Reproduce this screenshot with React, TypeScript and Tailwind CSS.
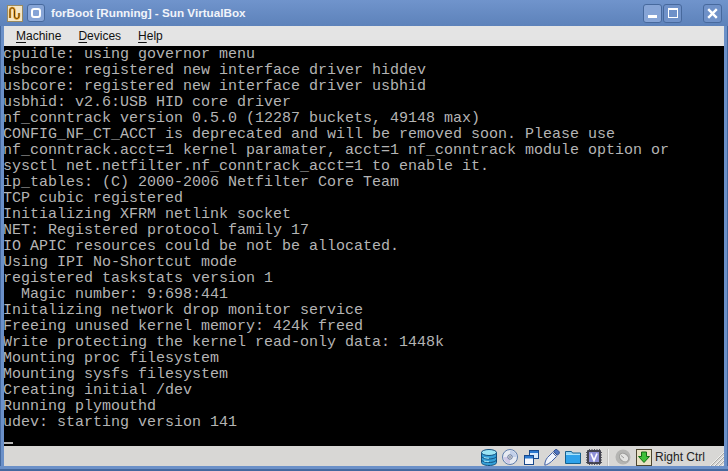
const lines = [
  "cpuidle: using governor menu",
  "usbcore: registered new interface driver hiddev",
  "usbcore: registered new interface driver usbhid",
  "usbhid: v2.6:USB HID core driver",
  "nf_conntrack version 0.5.0 (12287 buckets, 49148 max)",
  "CONFIG_NF_CT_ACCT is deprecated and will be removed soon. Please use",
  "nf_conntrack.acct=1 kernel paramater, acct=1 nf_conntrack module option or",
  "sysctl net.netfilter.nf_conntrack_acct=1 to enable it.",
  "ip_tables: (C) 2000-2006 Netfilter Core Team",
  "TCP cubic registered",
  "Initializing XFRM netlink socket",
  "NET: Registered protocol family 17",
  "IO APIC resources could be not be allocated.",
  "Using IPI No-Shortcut mode",
  "registered taskstats version 1",
  "  Magic number: 9:698:441",
  "Initalizing network drop monitor service",
  "Freeing unused kernel memory: 424k freed",
  "Write protecting the kernel read-only data: 1448k",
  "Mounting proc filesystem",
  "Mounting sysfs filesystem",
  "Creating initial /dev",
  "Running plymouthd",
  "udev: starting version 141",
];

function TitleButton({ children, active }: { children: React.ReactNode; active?: boolean }) {
  return (
    <div className={`w-[19px] h-[19px] rounded-[3px] border border-[#47699d] flex items-center justify-center ${active ? "bg-[#86a4d6]" : "bg-[#6f91c8]"}`}>
      {children}
    </div>
  );
}

function StatusIcons() {
  return (
    <div className="flex items-center h-full gap-[5px]">
      <svg width="16" height="17" viewBox="0 0 16 17">
        <path d="M0.500 3.500v10c0 1.700 3.300 3 7.500 3s7.500-1.300 7.500-3v-10z" fill="#35a0d8" stroke="#12507e" />
        <ellipse cx="8" cy="3.500" rx="7.500" ry="3" fill="#9be4f4" stroke="#12507e" />
        <path d="M0.500 7c0 1.700 3.300 3 7.500 3s7.500-1.300 7.500-3M0.500 10.500c0 1.700 3.300 3 7.500 3s7.500-1.300 7.500-3" fill="none" stroke="#12507e" />
        <path d="M3 8.500c1.500.5 3 .7 5 .7M3 12c1.500.5 3 .7 5 .7" fill="none" stroke="#a8e8f8" />
      </svg>
      <svg width="16" height="16" viewBox="0 0 16 16">
        <circle cx="8" cy="8" r="7.500" fill="#e6eaf2" stroke="#5d7cab" />
        <path d="M8 1.500a6.500 6.500 0 0 1 6.500 6.500H10a2 2 0 0 0-2-2z" fill="#c2d0ea" />
        <path d="M8 14.500A6.500 6.500 0 0 1 1.500 8H6a2 2 0 0 0 2 2z" fill="#cfc9e6" />
        <circle cx="8" cy="8" r="2.200" fill="#fff" stroke="#5a6d90" />
        <circle cx="8" cy="8" r="0.800" fill="#2e3a55" />
      </svg>
      <svg width="15" height="15" viewBox="0 0 15 15" className="ml-[1px]">
        <rect x="5.500" y="0.500" width="9" height="8" fill="#d6e8fb" stroke="#17488c" />
        <rect x="6" y="1" width="8" height="2" fill="#2a78d0" />
        <rect x="0.500" y="5.500" width="9" height="9" fill="#f4f8ff" stroke="#17488c" />
        <rect x="1" y="6" width="8" height="2.500" fill="#2a78d0" />
      </svg>
      <svg width="16" height="17" viewBox="0 0 16 17">
        <path d="M0.800 16.200c0-3 1-5.500 2.700-7.700l5-5 4 4-5 5c-2.200 1.700-4 3.200-6.700 3.700z" fill="#f0f4fb" stroke="#3f5fa5" />
        <path d="M9.500 2.500l1.800-1.800c.6-.4 1.200-.4 1.800 0l2 2c.4.600.4 1.200 0 1.800L13.300 6.300z" fill="#4f74bd" stroke="#2f4c8c" />
      </svg>
      <svg width="16" height="14" viewBox="0 0 16 14">
        <path d="M0.500 1.500h6l1 1.500h8v10.500h-15z" fill="#8fd4f6" stroke="#14608f" />
        <rect x="1" y="4.500" width="14" height="8.500" fill="#2fa2ea" />
        <path d="M1 4.500h14" stroke="#a8e2fb" />
      </svg>
      <svg width="16" height="16" viewBox="0 0 16 16">
        <rect x="1" y="1" width="14" height="14" rx="1" fill="#43434f" />
        <path d="M1 3.500H0M1 6H0M1 8.500H0M1 11H0M1 13.500H0M16 3.500h-1M16 6h-1M16 8.500h-1M16 11h-1M16 13.500h-1M3.500 1V0M6 1V0M8.500 1V0M11 1V0M13.500 1V0M3.500 16v-1M6 16v-1M8.500 16v-1M11 16v-1M13.500 16v-1" stroke="#55555f" />
        <rect x="3" y="3" width="10" height="10" fill="#8e90d8" />
        <path d="M5 4.500l3 7L11 4.500" fill="none" stroke="#fafaff" strokeWidth="1.700" />
      </svg>
      <div className="w-[2px] h-[17px] bg-[#c4c3c1] border-r border-[#eeeeee]" />
      <svg width="16" height="16" viewBox="0 0 16 16" className="ml-[1px]">
        <circle cx="8" cy="8" r="7.500" fill="#b4b4b2" />
        <ellipse cx="9" cy="8.500" rx="3.800" ry="5" transform="rotate(-50 9 8.500)" fill="#e4e4e2" stroke="#9a9a98" />
        <path d="M6 6.500l3 2.500" stroke="#9a9a98" />
      </svg>
      <div className="w-[16px] h-[17px] border border-[#4d4630] bg-[#e9e1c4] flex items-center justify-center">
        <svg width="12" height="12" viewBox="0 0 12 12">
          <path d="M3.500 1h5v4.500H11.500L6 11.500 0.500 5.500h3z" fill="#3fc13a" stroke="#156a15" />
        </svg>
      </div>
    </div>
  );
}

export default function App() {
  return (
    <div className="w-[728px] h-[471px] overflow-hidden flex flex-col bg-[#6b90c8]" style={{ fontFamily: '"Liberation Sans", Arial, sans-serif' }}>
      <div className="h-[26px] shrink-0 flex items-center bg-gradient-to-b from-[#7094cc] to-[#5d82ba] pl-[7px] pr-[6px]">
        <svg width="16" height="17" viewBox="0 0 16 17" className="shrink-0">
          <rect x="0.500" y="0.500" width="15" height="16" fill="#f3e6c8" stroke="#9a8a60" />
          <path d="M3 13V5.500c0-3.500 4.500-3.500 4.500 0V11c0 3.500 4.500 3.500 4.500 0V8" fill="none" stroke="#f0a020" strokeWidth="2.400" />
          <path d="M3 13V5.500c0-3.500 4.500-3.500 4.500 0V11c0 3.500 4.500 3.500 4.500 0V8" fill="none" stroke="#4a3210" strokeWidth="0.900" />
        </svg>
        <div className="ml-[4px] w-[18px] h-[18px] rounded-[3px] bg-[#86a4d6] border border-[#47699d] flex items-center justify-center">
          <div className="w-[10px] h-[10px] rounded-[3px] border-[2.500px] border-white" />
        </div>
        <div className="ml-[6px] text-[11.700px] font-bold text-[#f1f4fa] leading-none whitespace-nowrap">forBoot [Running] - Sun VirtualBox</div>
        <div className="ml-auto flex items-center gap-[1px]">
          <TitleButton active>
            <div className="w-[9px] h-[3px] bg-white mt-[7px]" />
          </TitleButton>
          <TitleButton>
            <div className="w-[10px] h-[10px] border border-white border-t-[2px]" />
          </TitleButton>
          <div className="ml-[20px]">
            <TitleButton>
              <svg width="11" height="11" viewBox="0 0 11 11">
                <path d="M1.200 1.200l8.600 8.600M9.800 1.200l-8.600 8.600" stroke="#fff" strokeWidth="2.400" />
              </svg>
            </TitleButton>
          </div>
        </div>
      </div>
      <div className="flex-1 min-h-0 flex flex-col border-l border-r border-[#44689e] px-[3px]">
        <div className="h-[20px] shrink-0 bg-[#e4e4e4] flex items-center pl-[12px] text-[12px] text-[#111] gap-[17px]">
          <span><span className="underline underline-offset-2">M</span>achine</span>
          <span><span className="underline underline-offset-2">D</span>evices</span>
          <span><span className="underline underline-offset-2">H</span>elp</span>
        </div>
        <div className="h-[400px] w-[720px] shrink-0 bg-black text-[#b4b4b4] text-[15px] leading-[16px] whitespace-pre overflow-hidden" style={{ fontFamily: '"Liberation Mono", monospace' }}>
          <div className="-ml-[1px] pt-[1px]">
            {lines.map((l) => (
              <div key={l} className="h-[16px]">{l}</div>
            ))}
          </div>
          <div className="h-[15px] flex items-end pb-[2px]"><div className="w-[9px] h-[2px] bg-[#b4b4b4]" /></div>
        </div>
        <div className="h-[20px] shrink-0 bg-[#d8d7d5] flex items-center justify-end relative pt-[2px]">
          <StatusIcons />
          <div className="ml-[3px] mr-[19px] text-[12px] text-[#222] whitespace-nowrap">Right Ctrl</div>
          <svg width="15" height="15" viewBox="0 0 15 15" className="absolute right-0 bottom-0">
            <path d="M15 1L1 15M15 5L5 15M15 9L9 15M15 13L13 15" stroke="#f2f2f0" />
            <path d="M15 2L2 15M15 6L6 15M15 10L10 15" stroke="#a9a8a6" />
          </svg>
        </div>
      </div>
      <div className="h-[5px] shrink-0 bg-[#6b90c8] border-b-2 border-[#44689e]" />
    </div>
  );
}
